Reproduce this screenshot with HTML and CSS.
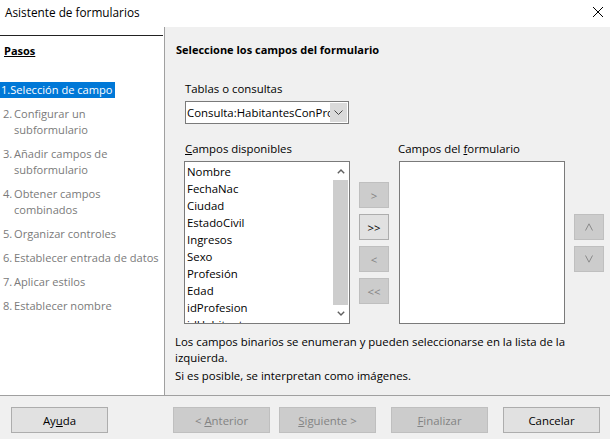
FILE: index.html
```html
<!DOCTYPE html>
<html>
<head>
  <meta charset="utf-8">
  <title>Asistente de formularios</title>
  <link rel="stylesheet" href="styles.css">
</head>
<body>
  <div class="dialog">
    <div class="titlebar">
      <span class="title">Asistente de formularios</span>
      <svg class="close" width="12" height="12" viewBox="0 0 12 12">
        <path d="M1 1 L11 11 M11 1 L1 11" stroke="#000" stroke-width="1" fill="none"/>
      </svg>
    </div>

    <div class="main">
      <div class="steps">
        <div class="steps-rule"></div>
        <div class="steps-title">Pasos</div>
        <ul class="step-list">
          <li class="step active"><span class="num">1.</span><span class="label">Selección de campo</span></li>
          <li class="step"><span class="num">2.</span><span class="label">Configurar un<br>subformulario</span></li>
          <li class="step"><span class="num">3.</span><span class="label">Añadir campos de<br>subformulario</span></li>
          <li class="step"><span class="num">4.</span><span class="label">Obtener campos<br>combinados</span></li>
          <li class="step"><span class="num">5.</span><span class="label">Organizar controles</span></li>
          <li class="step"><span class="num">6.</span><span class="label">Establecer entrada de datos</span></li>
          <li class="step"><span class="num">7.</span><span class="label">Aplicar estilos</span></li>
          <li class="step"><span class="num">8.</span><span class="label">Establecer nombre</span></li>
        </ul>
      </div>

      <div class="content">
        <h2>Seleccione los campos del formulario</h2>

        <div class="field-label">Tablas o consultas</div>
        <div class="combo">
          <span class="combo-text">Consulta:HabitantesConPro</span>
          <span class="combo-btn">
            <svg width="9" height="6" viewBox="0 0 9 6"><path d="M0.5 0.5 L4.5 4.5 L8.5 0.5" stroke="#444" fill="none"/></svg>
          </span>
        </div>

        <div class="lists">
          <div class="list-col">
            <div class="list-label"><u>C</u>ampos disponibles</div>
            <div class="listbox">
              <ul class="items">
                <li>Nombre</li>
                <li>FechaNac</li>
                <li>Ciudad</li>
                <li>EstadoCivil</li>
                <li>Ingresos</li>
                <li>Sexo</li>
                <li>Profesión</li>
                <li>Edad</li>
                <li>idProfesion</li>
                <li>idHabitante</li>
              </ul>
              <div class="scrollbar">
                <span class="arrow">
                  <svg width="8" height="5" viewBox="0 0 8 5"><path d="M0.8 4.2 L4 1 L7.2 4.2" stroke="#606060" stroke-width="1.4" fill="none"/></svg>
                </span>
                <span class="thumb"></span>
                <span class="arrow">
                  <svg width="8" height="5" viewBox="0 0 8 5"><path d="M0.8 0.8 L4 4 L7.2 0.8" stroke="#606060" stroke-width="1.4" fill="none"/></svg>
                </span>
              </div>
            </div>
          </div>

          <div class="move-btns">
            <button class="small" disabled>&gt;</button>
            <button class="small">&gt;&gt;</button>
            <button class="small" disabled>&lt;</button>
            <button class="small" disabled>&lt;&lt;</button>
          </div>

          <div class="list-col">
            <div class="list-label right">Campos del <u>f</u>ormulario</div>
            <div class="listbox"></div>
          </div>

          <div class="order-btns">
            <button class="small" disabled>
              <svg width="8" height="8" viewBox="0 0 8 8"><path d="M0.5 7.5 L4 0.8 L7.5 7.5" stroke="#8a8a8a" fill="none"/></svg>
            </button>
            <button class="small" disabled>
              <svg width="8" height="8" viewBox="0 0 8 8"><path d="M0.5 0.5 L4 7.2 L7.5 0.5" stroke="#8a8a8a" fill="none"/></svg>
            </button>
          </div>
        </div>

        <p class="note">Los campos binarios se enumeran y pueden seleccionarse en la lista de la izquierda.</p>
        <p class="note second">Si es posible, se interpretan como imágenes.</p>
      </div>
    </div>

    <div class="footer">
      <button class="btn help">Ay<u>u</u>da</button>
      <div class="nav">
        <button class="btn" disabled>&lt; <u>A</u>nterior</button>
        <button class="btn" disabled><u>S</u>iguiente &gt;</button>
      </div>
      <button class="btn finish" disabled><u>F</u>inalizar</button>
      <button class="btn">Cancelar</button>
    </div>
  </div>
</body>
</html>
```

FILE: styles.css
```css
body {
  margin: 0;
  font-family: 'Open Sans', 'Noto Sans', sans-serif;
  font-size: 11.4px;
  color: #000;
  background: #f0f0f0;
}

.dialog {
  width: 610px;
  height: 439px;
  overflow: hidden;
}

.titlebar {
  height: 27px;
  background: white;
  display: flex;
  align-items: center;
  justify-content: space-between;
  padding: 0 6px 3px 5px;
  box-sizing: border-box;
  font-size: 11.8px;
}

.main {
  display: flex;
  height: 368px;
}

.steps {
  width: 164px;
  background: white;
  border-right: 1px solid #a0a0a0;
  padding-top: 8px;
}

.steps-rule {
  height: 1px;
  background: #222;
  width: 163px;
}

.steps-title {
  margin: 7px 0 0 4px;
  line-height: 16px;
  font-size: 11px;
  font-weight: bold;
  text-decoration: underline;
}

.step-list {
  list-style: none;
  margin: 23px 0 0 0;
  padding: 0;
}

.step {
  display: flex;
  line-height: 16px;
  margin-bottom: 8px;
  padding-left: 3px;
  font-size: 11.1px;
  color: #7a7a7a;
  white-space: nowrap;
}

.step .num {
  width: 11px;
  flex: none;
}

.step.active {
  display: inline-flex;
  padding: 0 2px 0 1px;
  background: #0078d7;
  color: white;
}

.step.active .num {
  width: auto;
}

.content {
  flex: 1;
  padding: 15px 0 0 11px;
}

.content h2 {
  margin: 0;
  font-size: 11px;
  line-height: 16px;
  font-weight: bold;
}

.field-label {
  margin: 23px 0 0 9px;
  line-height: 16px;
}

.combo {
  margin: 4px 0 0 9px;
  width: 164px;
  height: 23px;
  box-sizing: border-box;
  border: 1px solid #7a7a7a;
  background: white;
  display: flex;
  align-items: center;
}

.combo-text {
  flex: 1;
  overflow: hidden;
  white-space: nowrap;
  padding-left: 1px;
}

.combo-btn {
  width: 17px;
  height: 19px;
  margin-right: 1px;
  background: #dadada;
  display: flex;
  align-items: center;
  justify-content: center;
}

.lists {
  display: flex;
  margin: 17px 0 0 8px;
}

.list-col {
  width: 166px;
}

.list-label {
  line-height: 16px;
  padding-left: 1px;
  margin-bottom: 4px;
}

.list-label.right {
  padding-left: 0;
  margin-left: -1px;
}

.listbox {
  height: 163px;
  box-sizing: border-box;
  border: 1px solid #7a7a7a;
  background: white;
  display: flex;
  overflow: hidden;
}

.items {
  list-style: none;
  margin: 0;
  padding: 1px 0 0 2px;
  flex: 1;
  line-height: 17px;
}

.scrollbar {
  width: 15px;
  margin: 1px 1px 1px 0;
  background: #f0f0f0;
  display: flex;
  flex-direction: column;
}

.scrollbar .arrow {
  height: 17px;
  display: flex;
  align-items: center;
  justify-content: center;
  background: white;
}

.scrollbar .thumb {
  flex: 1;
  background: #cdcdcd;
}

.move-btns {
  width: 30px;
  margin: 41px 10px 0 9px;
  display: flex;
  flex-direction: column;
  gap: 6px;
}

.order-btns {
  width: 30px;
  margin: 73px 0 0 9px;
  display: flex;
  flex-direction: column;
  gap: 6px;
}

button {
  font-family: inherit;
  font-size: 11.4px;
  color: #000;
  background: #e1e1e1;
  border: 1px solid #adadad;
  padding: 0;
  margin: 0;
}

button:disabled {
  background: #cccccc;
  border-color: #bfbfbf;
  color: #838383;
}

button.small {
  width: 30px;
  height: 26px;
  display: flex;
  align-items: center;
  justify-content: center;
}

.note {
  margin: 10px 0 0 -1px;
  line-height: 16px;
  width: 400px;
}

.note.second {
  margin-top: 2px;
}

.footer {
  height: 44px;
  border-top: 1px solid #a0a0a0;
  display: flex;
  padding: 11px 0 0 11px;
  box-sizing: border-box;
}

.btn {
  width: 97px;
  height: 26px;
}

.nav {
  display: flex;
  gap: 9px;
  margin-left: 65px;
}

.finish {
  margin-left: 15px;
  margin-right: 15px;
}
```
